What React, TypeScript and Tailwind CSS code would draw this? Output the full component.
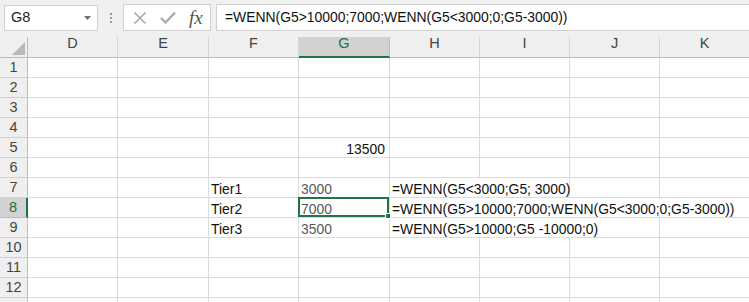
import React from "react";

const COLS = ["D", "E", "F", "G", "H", "I", "J", "K"];

type CellDef = { text: string; span?: number; right?: boolean; gray?: boolean };

const DATA: Record<string, CellDef> = {
  "5-G": { text: "13500", right: true },
  "7-F": { text: "Tier1" },
  "7-G": { text: "3000", gray: true },
  "7-H": { text: "=WENN(G5<3000;G5; 3000)", span: 2 },
  "8-F": { text: "Tier2" },
  "8-G": { text: "7000", gray: true },
  "8-H": { text: "=WENN(G5>10000;7000;WENN(G5<3000;0;G5-3000))", span: 4 },
  "9-F": { text: "Tier3" },
  "9-G": { text: "3500", gray: true },
  "9-H": { text: "=WENN(G5>10000;G5 -10000;0)", span: 3 },
};

const SPAN_CLASS: Record<number, string> = {
  1: "",
  2: "col-span-2",
  3: "col-span-3",
  4: "col-span-4",
};

function Row({ r }: { r: number }) {
  const cells: React.ReactNode[] = [];
  const selRow = r === 8;
  cells.push(
    <div
      key="h"
      className={
        "h-[20px] flex items-center justify-center border-b text-[14.5px] " +
        (selRow
          ? "bg-[#d2d2d2] text-[#217346] border-b-[#bdbdbd] border-r-2 border-r-[#217346]"
          : "bg-[#efefef] text-[#444] border-b-[#d0d0d0] border-r border-r-[#bdbdbd]")
      }
    >
      {r <= 12 ? r : ""}
    </div>
  );
  for (let i = 0; i < COLS.length; i++) {
    const c = COLS[i];
    const def = DATA[`${r}-${c}`];
    const span = def?.span ?? 1;
    const isSel = r === 8 && c === "G";
    cells.push(
      <div
        key={c}
        className={
          "relative h-[20px] flex items-end border-b border-r border-[#dadada] leading-[16px] whitespace-nowrap " +
          SPAN_CLASS[span] +
          (def?.right ? " justify-end pr-[4px]" : " pl-[2px]") +
          (def?.gray ? " text-[#595959]" : " text-[#111]")
        }
      >
        {def && <span>{def.text}</span>}
        {isSel && (
          <div className="absolute -top-[1px] -left-[1px] right-0 bottom-0 border-2 border-[#217346] z-10">
            <div className="absolute -right-[4px] -bottom-[4px] w-[6px] h-[6px] bg-[#217346] border border-white" />
          </div>
        )}
      </div>
    );
    i += span - 1;
  }
  return <>{cells}</>;
}

export default function App() {
  return (
    <div
      className="w-[749px] h-[302px] overflow-hidden bg-white text-[13.9px]"
      style={{ fontFamily: '"Liberation Sans", Arial, sans-serif' }}
    >
      {/* Toolbar / formula bar */}
      <div className="h-[37px] bg-[#f0f0f0] flex items-start pt-[5px]">
        <div className="ml-[4px] w-[94px] h-[26px] bg-white border border-[#d0d0d0] flex items-center pl-[6px] pr-[6px] text-[14.5px] text-[#222]">
          <span className="flex-1">G8</span>
          <svg width="7" height="4" viewBox="0 0 7 4">
            <polygon points="0,0 7,0 3.5,4" fill="#6f6f6f" />
          </svg>
        </div>
        <div className="w-[25px] h-[26px] flex flex-col items-center justify-center gap-[2px]">
          <div className="w-[2px] h-[2px] bg-[#9a9a9a]" />
          <div className="w-[2px] h-[2px] bg-[#9a9a9a]" />
          <div className="w-[2px] h-[2px] bg-[#9a9a9a]" />
        </div>
        <div className="-mt-[1px] w-[88px] h-[27px] bg-white border border-[#d0d0d0] flex items-center">
          <svg className="ml-[9px]" width="14" height="14" viewBox="0 0 14 14">
            <path d="M1.5 1.5 L12.5 12.5 M12.5 1.5 L1.5 12.5" stroke="#a8a8a8" strokeWidth="1.6" fill="none" />
          </svg>
          <svg className="ml-[13px]" width="16" height="13" viewBox="0 0 16 13">
            <path d="M1 7 L5.5 11.5 L15 1.5" stroke="#a8a8a8" strokeWidth="2.2" fill="none" />
          </svg>
          <span
            className="ml-[13px] italic text-[19px] text-[#555] leading-none"
            style={{ fontFamily: '"Liberation Serif", "Times New Roman", serif' }}
          >
            fx
          </span>
        </div>
        <div className="-mt-[1px] ml-[5px] flex-1 h-[27px] bg-white border border-[#d0d0d0] border-r-0 flex items-center pl-[8px] text-[13.9px] text-[#111] whitespace-nowrap">
          =WENN(G5&gt;10000;7000;WENN(G5&lt;3000;0;G5-3000))
        </div>
      </div>

      {/* Grid */}
      <div className="grid grid-cols-[28px_90px_91px_90px_91px_90px_90px_90px_90px]">
        {/* corner */}
        <div className="relative h-[21px] bg-[#efefef] border-b border-r border-[#bdbdbd]">
          <svg className="absolute left-0 top-0" width="28" height="21" viewBox="0 0 28 21">
            <polygon points="25,5 25,18 12,18" fill="#b9b9b9" />
          </svg>
        </div>
        {COLS.map((c) =>
          c === "G" ? (
            <div
              key={c}
              className="h-[21px] bg-[#d2d2d2] text-[#217346] text-[14.5px] flex items-end justify-center pb-[1px] border-b-2 border-[#217346] border-r border-r-[#bdbdbd]"
            >
              {c}
            </div>
          ) : (
            <div
              key={c}
              className="h-[21px] bg-[#efefef] text-[#444] text-[14.5px] flex items-end justify-center pb-[2px] border-b border-[#bdbdbd] border-r border-r-[#d4d4d4]"
            >
              {c}
            </div>
          )
        )}
        {Array.from({ length: 13 }, (_, i) => (
          <Row key={i + 1} r={i + 1} />
        ))}
      </div>
    </div>
  );
}
